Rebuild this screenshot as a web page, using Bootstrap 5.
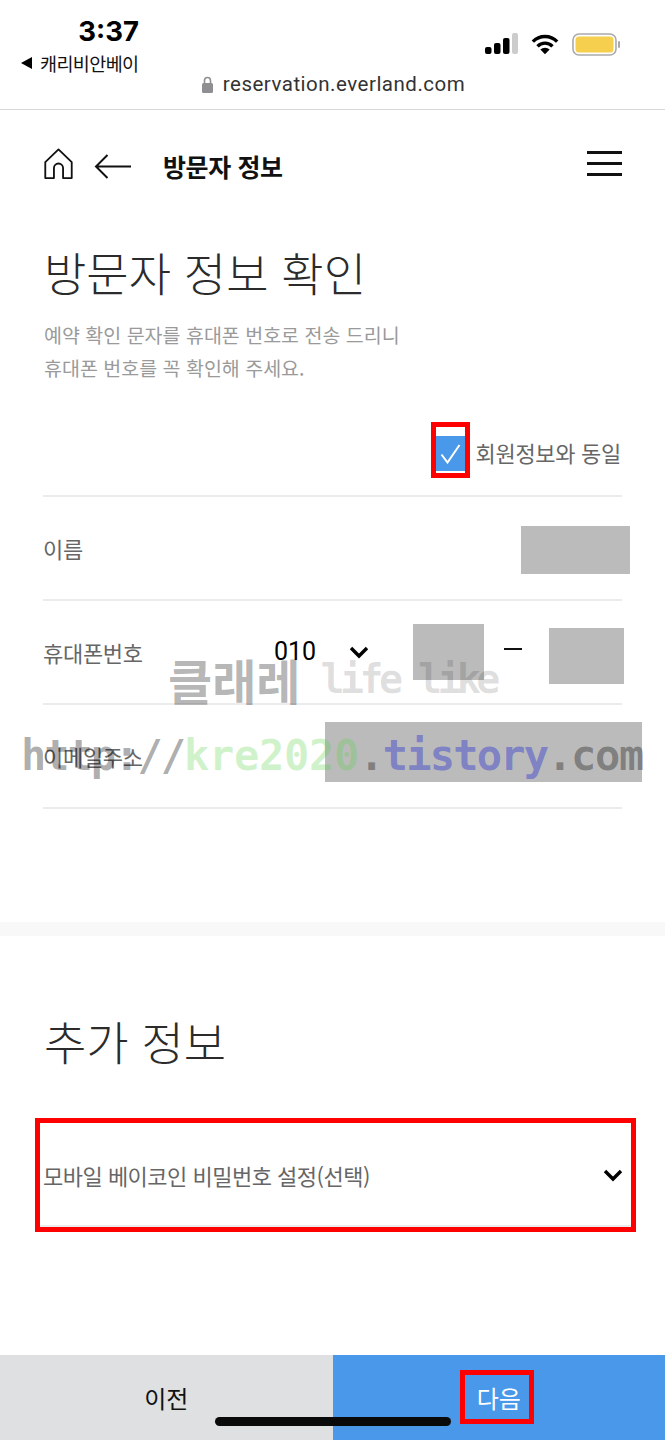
<!DOCTYPE html>
<html lang="ko">
<head>
  <meta charset="UTF-8">
  <title>방문자 정보</title>
  <meta name="viewport" content="width=device-width, initial-scale=1.0">
  <link href="https://cdn.jsdelivr.net/npm/bootstrap@5.3.3/dist/css/bootstrap.min.css" rel="stylesheet">
  <style>
    body { width: 665px; height: 1440px; overflow: hidden; position: relative; background: #fff; font-family: "Noto Sans CJK KR", "Noto Sans", sans-serif; color: #111; }
    .status-area { height: 110px; border-bottom: 1px solid #d6d6d6; }
    .status-top { height: 71px; padding: 14px 45px 0 21px; }
    .clock { width: 118px; text-align: right; font: 700 27.5px/34px "Inter", "Liberation Sans", sans-serif; color: #000; }
    .back-app { font-size: 18.5px; line-height: 24px; margin-top: 3px; color: #111; letter-spacing: -.6px; }
    .back-tri { width: 0; height: 0; border: 6px solid transparent; border-right: 11px solid #000; border-left: 0; margin-right: 8px; }
    .status-icons { margin-top: 19px; gap: 13px; }
    .url-line { font: 400 20.5px/26px "Roboto", "Liberation Sans", sans-serif; color: #333; letter-spacing: .5px; gap: 10px; padding-left: 2px; }
    .page-head { height: 112px; padding: 0 43px; }
    .ic-home { margin-bottom: 5px; }
    .ic-back { margin-left: 20px; }
    .ic-menu { margin-bottom: 5px; }
    .page-head-title { font-size: 25px; font-weight: 700; margin-left: 32px; line-height: 1; letter-spacing: -.4px; }
    .main-title { font-size: 46px; font-weight: 300; line-height: 60px; color: #2b2b2b; margin: 19px 0 0 44px; }
    .main-desc { margin: 17px 0 0 44px; font-size: 19.5px; line-height: 33px; color: #9a9a9a; }
    .same-row { height: 113px; margin: 0 43px; padding: 52px 1px 0 0; border-bottom: 2px solid #ececec; }
    .tick-box { width: 30px; height: 35px; background: #4a98ea; margin-right: 10px; }
    .same-label { font-size: 22px; color: #666; letter-spacing: -.3px; }
    .form-line { height: 104px; margin: 0 43px; border-bottom: 2px solid #ececec; font-size: 22px; color: #666; }
    .form-line-label { letter-spacing: -.3px; }
    .phone-label { width: 231px; }
    .mask { background: #bbb; }
    .mask-name { width: 109px; height: 48px; margin: 4px -8px 0 auto; }
    .mask-phone1 { width: 71px; height: 56px; margin: -1px 0 0 44px; }
    .mask-phone2 { width: 75px; height: 56px; margin: 7px -2px 0 27px; }
    .mask-mail { width: 317px; height: 60px; margin: 0 -20px 8px auto; }
    .prefix { width: 75px; font: 400 25px/36px "Roboto", sans-serif; color: #000; }
    .dash { width: 18px; height: 2px; background: #111; margin: 0 0 6px 20px; }
    .section-gap { height: 14px; background: #f8f8f8; margin-top: 113px; }
    .sub-title { font-size: 46px; font-weight: 300; line-height: 60px; color: #2b2b2b; margin: 74px 0 0 44px; }
    .opt-row { height: 114px; margin: 48px 29px 0 35px; border: 5px solid #f00; padding: 0 8px 0 3px; font-size: 22px; color: #666; letter-spacing: -.5px; box-shadow: inset 0 -2px #ececec; }
    .foot-btns { position: absolute; left: 0; right: 0; top: 1355px; height: 85px; font-size: 24px; }
    .foot-prev { background: #dfe0e2; color: #111; padding-top: 25px; }
    .foot-next { background: #4a98ea; color: #fff; padding-top: 25px; }
    .mark-box { position: absolute; border: 5px solid #f00; }
    .mark-check { left: 431px; top: 422px; width: 39px; height: 56px; }
    .mark-next { left: 460px; top: 1370px; width: 74px; height: 54px; }
    .home-bar { position: absolute; left: 215px; top: 1417px; width: 236px; height: 9px; border-radius: 5px; background: #0a0a0a; }
    .wm { position: absolute; white-space: pre; font-weight: 700; line-height: 1; }
    .wm-top { left: 168px; top: 655px; font-size: 48px; color: rgba(0,0,0,.3); }
    .wm-top span { font-family: "DejaVu Sans Mono", monospace; color: rgba(0,0,0,.13); font-size: 40px; letter-spacing: -4.6px; margin-left: 20px; vertical-align: 7px; }
    .wm-url { left: 21px; top: 735px; font-size: 42px; letter-spacing: -2px; font-family: "DejaVu Sans Mono", monospace; color: rgba(0,0,0,.32); }
    .wm-url .g { color: rgba(90,210,70,.28); letter-spacing: -.3px; }
    .wm-url .b { color: rgba(30,40,210,.4); letter-spacing: -1.8px; }
    .wm-url .c { letter-spacing: -1.4px; }
  </style>
</head>
<body>

<div class="status-area">
  <div class="status-top d-flex justify-content-between">
    <div>
      <div class="clock">3:37</div>
      <div class="back-app d-flex align-items-center"><span class="back-tri"></span>캐리비안베이</div>
    </div>
    <div class="status-icons d-flex align-items-start">
      <svg width="33" height="22" viewBox="0 0 33 22"><rect x="0" y="14" width="6.5" height="7" rx="2" fill="#000"/><rect x="9" y="10" width="6.5" height="11" rx="2" fill="#000"/><rect x="18" y="5" width="6.5" height="16" rx="2" fill="#000"/><rect x="27" y="0" width="6" height="21" rx="2" fill="#ccc"/></svg>
      <svg width="28" height="22" viewBox="0 0 30 22" fill="none" stroke="#000" stroke-width="3.6"><path d="M2 8.5a18 18 0 0 1 26 0"/><path d="M7 13.5a11 11 0 0 1 16 0"/><path d="M15 22l-5-5a7 7 0 0 1 10 0z" fill="#000" stroke="none"/></svg>
      <svg width="48" height="24" viewBox="0 0 48 24"><rect x="1" y="1" width="43" height="21" rx="6" fill="#fff" stroke="#aaa" stroke-width="1.6"/><rect x="3.5" y="3.5" width="38" height="16" rx="3.5" fill="#f5cf4d"/><rect x="46" y="8" width="2" height="7" rx="1" fill="#aaa"/></svg>
    </div>
  </div>
  <div class="url-line d-flex justify-content-center align-items-center">
    <svg width="11" height="17" viewBox="0 0 11 17"><rect x="0" y="7" width="11" height="10" rx="1.5" fill="#8e8e93"/><path d="M2.5 8V4.5a3 3 0 0 1 6 0V8" fill="none" stroke="#8e8e93" stroke-width="1.6"/></svg>
    <span>reservation.everland.com</span>
  </div>
</div>

<div class="page-head d-flex align-items-center">
  <svg class="ic-home" width="31" height="31" viewBox="0 0 32 34" fill="none" stroke="#111" stroke-width="2" stroke-linejoin="round"><path d="M1.5 15.5L16 1.5l14.5 14V33H21V22a5 5 0 0 0-10 0v11H1.5z"/></svg>
  <svg class="ic-back" width="37" height="25" viewBox="0 0 37 25" fill="none" stroke="#111" stroke-width="2"><path d="M37 12.5H2M13.5 1L2 12.5 13.5 24"/></svg>
  <div class="page-head-title">방문자 정보</div>
  <svg class="ic-menu ms-auto" width="35" height="25" viewBox="0 0 35 25" fill="#111"><rect y="0" width="35" height="3"/><rect y="11" width="35" height="3"/><rect y="22" width="35" height="3"/></svg>
</div>

<h1 class="main-title">방문자 정보 확인</h1>
<p class="main-desc">예약 확인 문자를 휴대폰 번호로 전송 드리니<br>휴대폰 번호를 꼭 확인해 주세요.</p>

<div class="same-row d-flex justify-content-end align-items-start">
  <div class="tick-box d-flex align-items-center justify-content-center">
    <svg width="21" height="20" viewBox="0 0 21 20" fill="none" stroke="#fff" stroke-width="2"><path d="M1.5 10.5l6 8L19.5 1"/></svg>
  </div>
  <div class="same-label">회원정보와 동일</div>
</div>

<div class="form-line d-flex align-items-center">
  <span class="form-line-label">이름</span>
  <div class="mask mask-name"></div>
</div>
<div class="form-line d-flex align-items-center">
  <span class="form-line-label phone-label">휴대폰번호</span>
  <span class="prefix">010</span>
  <svg width="20" height="13" viewBox="0 0 20 13" fill="none" stroke="#000" stroke-width="3.4"><path d="M2 2l8 8 8-8"/></svg>
  <div class="mask mask-phone1"></div>
  <div class="dash"></div>
  <div class="mask mask-phone2"></div>
</div>
<div class="form-line d-flex align-items-center">
  <span class="form-line-label">이메일주소</span>
  <div class="mask mask-mail"></div>
</div>

<div class="section-gap"></div>

<h2 class="sub-title">추가 정보</h2>
<div class="opt-row d-flex align-items-center justify-content-between">
  <span>모바일 베이코인 비밀번호 설정(선택)</span>
  <svg width="20" height="13" viewBox="0 0 20 13" fill="none" stroke="#000" stroke-width="3.4"><path d="M2 2l8 8 8-8"/></svg>
</div>

<div class="foot-btns row g-0 text-center">
  <div class="col-6 foot-prev">이전</div>
  <div class="col-6 foot-next">다음</div>
</div>

<div class="mark-box mark-check"></div>
<div class="mark-box mark-next"></div>
<div class="home-bar"></div>

<div class="wm wm-top">클래레<span>life like</span></div>
<div class="wm wm-url">http://<span class="g">kre2020</span><span class="c">.</span><span class="b">tistory</span><span class="c">.com</span></div>

<script src="https://cdn.jsdelivr.net/npm/bootstrap@5.3.3/dist/js/bootstrap.bundle.min.js"></script>
</body>
</html>
